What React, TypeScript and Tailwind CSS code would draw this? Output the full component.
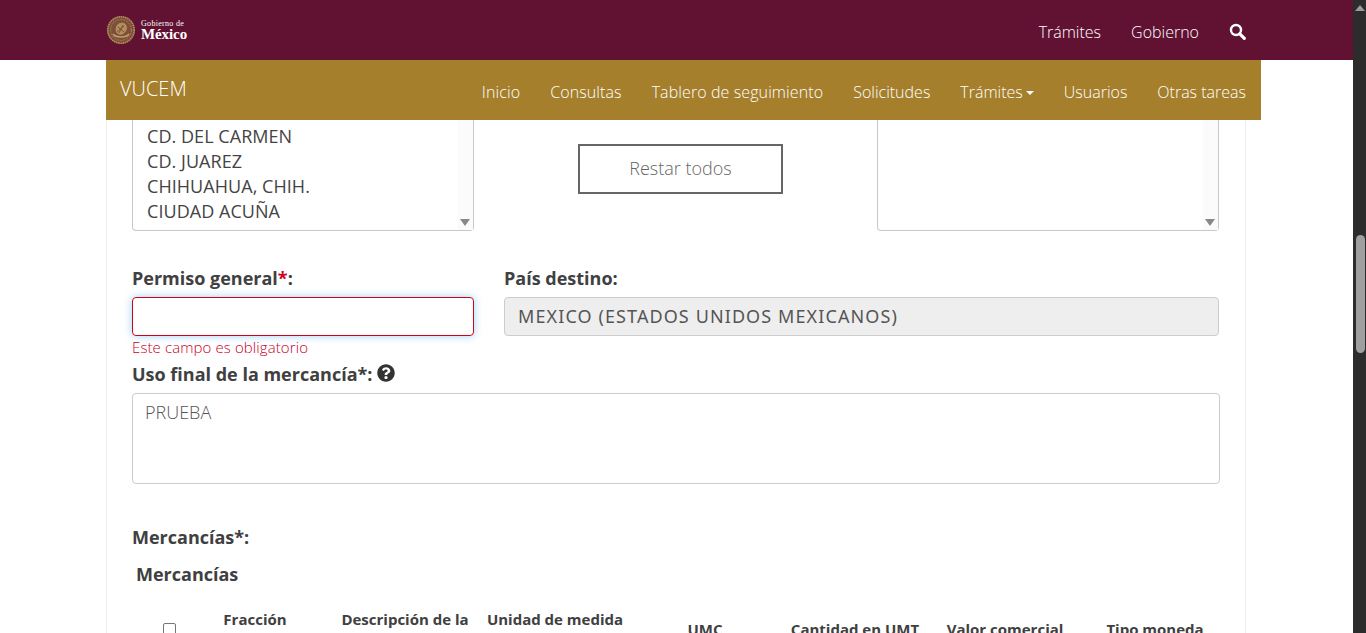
import { FaQuestionCircle } from 'react-icons/fa';

function ListBox({ items }: { items: string[] }) {
  return (
    <div className="relative h-[111px] w-[342px] rounded-b border border-t-0 border-[#c8c8c8] pl-[14px] pt-[4px] text-[18px] leading-[25px] tracking-[0.05px] text-[#444]">
      {items.map((item) => (
        <div key={item}>{item}</div>
      ))}
      <div className="absolute bottom-0 right-0 top-0 flex w-[15px] items-end justify-center bg-[#fbfbfb] pb-[4px] pr-px">
        <div className="h-0 w-0 border-x-[5px] border-t-[7px] border-x-transparent border-t-[#888]" />
      </div>
    </div>
  );
}

const headers = [
  ['Fracción', 'arancelaria'],
  ['Descripción de la', 'mercancía'],
  ['Unidad de medida', 'comercial'],
  ['UMC'],
  ['Cantidad en UMT'],
  ['Valor comercial'],
  ['Tipo moneda'],
];

export default function App() {
  return (
    <div className="flex h-[633px] overflow-hidden bg-white font-['Open_Sans',sans-serif] text-[#404041]">
      <div className="h-full w-[1353px] shrink-0">
        <div className="flex h-[60px] items-center justify-between bg-[#611232] pl-[106px] pr-[107px]">
          <div className="flex items-center gap-[5px]">
            <svg width="30" height="30" viewBox="0 0 30 30">
              <circle cx="15" cy="15" r="14" fill="#7d4f3a" />
              <circle cx="15" cy="15" r="13.2" fill="none" stroke="#b38e5d" strokeWidth="1.6" strokeDasharray="1.4 0.8" />
              <circle cx="15" cy="15" r="10.4" fill="none" stroke="#a67f52" strokeWidth="1" strokeDasharray="2 1" />
              <path d="M10 12c1-4 5-5 8-4 3 2 4 5 2 8-2 3-5 5-8 3-2-1-3-4-2-7z" fill="#b38e5d" />
              <path d="M7 19c3 4 13 4 16 0" fill="none" stroke="#c4a06e" strokeWidth="1.6" />
              <path d="M12 12l6 5M17 10l-4 8M11 17l7-6" stroke="#7a4a3a" strokeWidth="0.9" />
            </svg>
            <div className="font-['Liberation_Serif',serif] text-white">
              <div className="text-[8px] leading-[8px] tracking-[0.3px]">Gobierno de</div>
              <div className="text-[15px] font-bold leading-[13px] tracking-[-0.1px]">México</div>
            </div>
          </div>
          <div className="flex items-center gap-[30px] text-[16px] font-light text-white">
            <span className="mt-[4px]">Trámites</span>
            <span className="mt-[4px]">Gobierno</span>
            <svg width="17" height="17" viewBox="0 0 17 17" className="mt-[3px]">
              <circle cx="7" cy="7" r="5" fill="none" stroke="white" strokeWidth="2.4" />
              <path d="M10.8 10.8L15.3 15.3" stroke="white" strokeWidth="3.2" strokeLinecap="round" />
            </svg>
          </div>
        </div>

        <div className="ml-[106px] flex h-[60px] w-[1155px] items-center justify-between bg-[#a57f2c] pl-[14px] pr-[15px] font-light text-white">
          <span className="-mt-[3px] text-[20px]">VUCEM</span>
          <div className="mt-[4px] flex items-center gap-[30px] text-[16px]">
            <span className="tracking-[0.1px]">Inicio</span>
            <span className="tracking-[0.1px]">Consultas</span>
            <span className="tracking-[0.1px]">Tablero de seguimiento</span>
            <span>Solicitudes</span>
            <span className="flex items-center gap-[3px]">
              Trámites
              <span className="mt-[2px] h-0 w-0 border-x-[4px] border-t-[4px] border-x-transparent border-t-white" />
            </span>
            <span>Usuarios</span>
            <span>Otras tareas</span>
          </div>
        </div>

        <div className="ml-[106px] h-[513px] w-[1140px] overflow-hidden border-x border-[#eeeeee] pl-[25px] pr-[26px]">
          <div className="flex items-start justify-between">
            <ListBox items={['CD. DEL CARMEN', 'CD. JUAREZ', 'CHIHUAHUA, CHIH.', 'CIUDAD ACUÑA']} />
            <button className="ml-[10px] mt-[24px] h-[50px] w-[205px] border-2 border-[#666] pb-[2px] text-[18px] font-light text-[#666]">
              Restar todos
            </button>
            <ListBox items={[]} />
          </div>

          <div className="mt-[35px] flex gap-[30px]">
            <div className="w-[342px]">
              <div className="text-[18px] font-bold leading-[25px]">
                Permiso general<span className="text-[#d0021b]">*</span>:
              </div>
              <input className="mt-[6px] block h-[39px] w-full rounded border border-[#d0021b] shadow-[0_0_8px_rgba(102,175,233,0.6)] outline-none" />
              <div className="mt-px text-[15px] font-light leading-[20px] tracking-[0.1px] text-[#c8001e]">Este campo es obligatorio</div>
            </div>
            <div className="flex-1">
              <div className="text-[18px] font-bold leading-[25px]">País destino:</div>
              <div className="mt-[6px] flex h-[39px] items-center rounded border border-[#cccccc] bg-[#eeeeee] pl-[13px] font-['Noto_Sans',sans-serif] text-[18px] tracking-[1.1px] text-[#555]">
                MEXICO (ESTADOS UNIDOS MEXICANOS)
              </div>
            </div>
          </div>

          <div className="mt-[5px] flex items-center gap-[5px] text-[18px] font-bold leading-[25px]">
            Uso final de la mercancía*:
            <FaQuestionCircle className="-mt-[3px] text-[18px] text-[#333]" />
          </div>
          <div className="-mr-px mt-[6px] h-[91px] rounded border border-[#cccccc] pl-[12px] pt-[6px] text-[18px] font-light leading-[25px] text-[#555]">
            PRUEBA
          </div>

          <div className="mt-[41px] text-[18px] font-bold leading-[25px]">Mercancías*:</div>
          <div className="ml-[4px] mt-[12px] text-[18px] font-bold leading-[25px]">Mercancías</div>

          <div className="mt-[23px] flex items-center text-[15px] font-bold leading-[19px]">
            <div className="flex w-[48px] shrink-0 justify-center pl-[26px]">
              <span className="h-[13px] w-[13px] rounded-[2px] border border-[#767676] bg-white" />
            </div>
            {headers.map((h) => (
              <div key={h[0]} className="w-[150px] shrink-0 px-[4px] text-center">
                {h.map((line) => (
                  <div key={line}>{line}</div>
                ))}
              </div>
            ))}
          </div>
        </div>
      </div>

      <div className="h-full w-[13px] bg-[#2c2c2c] pl-px">
        <div className="mx-auto mt-[5px] h-0 w-0 border-x-[5px] border-b-[6px] border-x-transparent border-b-[#9b9b9b]" />
        <div className="mx-auto mt-[224px] h-[118px] w-[9px] rounded-full bg-[#9f9f9f]" />
      </div>
    </div>
  );
}
